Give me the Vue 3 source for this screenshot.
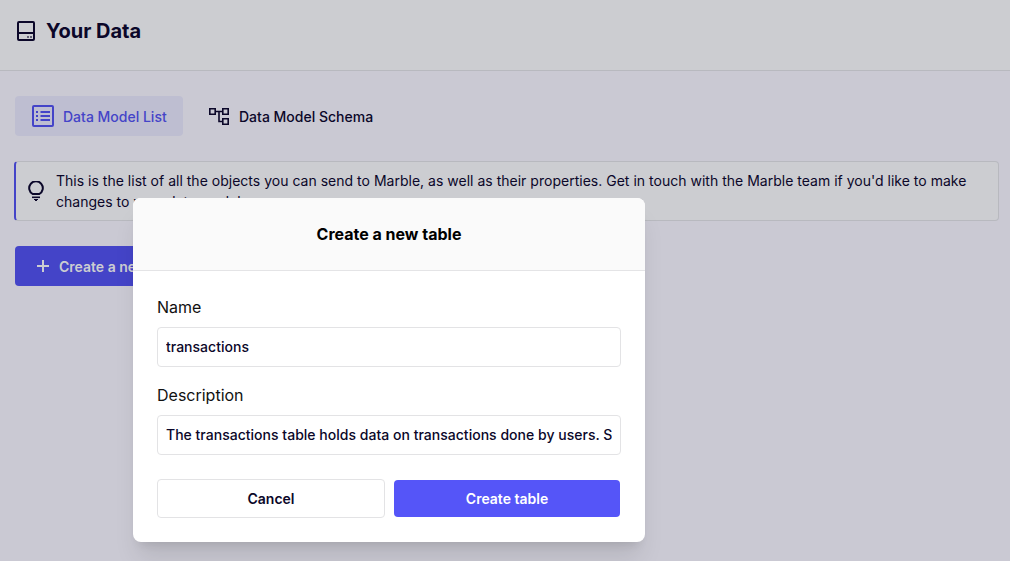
<script setup>
import { ref } from 'vue'

const name = ref('transactions')
const description = ref('The transactions table holds data on transactions done by users. Should be ingested in real time.')
</script>

<template>
  <div class="page">
    <header class="header">
      <svg class="disk" width="20" height="22" viewBox="0 0 20 22" fill="none">
        <rect x="1" y="1" width="16" height="18" rx="1" stroke="currentColor" stroke-width="2" />
        <path d="M1 12h16" stroke="currentColor" stroke-width="2" />
        <path d="M10 15h2v2h-2zM13 15h2v2h-2z" fill="currentColor" opacity=".55" />
      </svg>
      <h1>Your Data</h1>
    </header>
    <main class="content">
      <nav class="tabs">
        <a class="tab active">
          <svg width="22" height="22" viewBox="0 0 22 22" fill="none">
            <rect x="1" y="1" width="20" height="20" rx="1" stroke="currentColor" stroke-width="2" />
            <path d="M4 7h2M4 11h2M4 15h2M8.5 7H18M8.5 11H18M8.5 15H18" stroke="currentColor" stroke-width="2" />
          </svg>
          <span>Data Model List</span>
        </a>
        <a class="tab">
          <svg class="schema" width="21" height="20" viewBox="0 0 21 20" fill="none" stroke="currentColor">
            <path d="M.8 1.8h5.4v5.4H.8zM13.8 1.8h5.4v5.4h-5.4zM13.8 11.8h5.4v5.4h-5.4z" stroke-width="1.6" />
            <path d="M7 4.5h6M10 4.5v10h3" stroke-width="1.6" />
          </svg>
          <span>Data Model Schema</span>
        </a>
      </nav>
      <section class="callout">
        <svg width="16" height="20" viewBox="0 0 16 20" fill="none" stroke="currentColor" stroke-width="2">
          <path d="M4.9 13.1a6.8 6.8 0 1 1 6.2 0z" />
          <path d="M4 16.3h8" stroke-width="1.6" />
          <path d="M6 18h4v1H9v1H7v-1H6z" fill="currentColor" stroke="none" />
        </svg>
        <p>This is the list of all the objects you can send to Marble, as well as their properties. Get in touch with the Marble team if you'd like to make changes to your data model.</p>
      </section>
      <button class="new">
        <svg width="12" height="12" viewBox="0 0 12 12" stroke="currentColor" stroke-width="2"><path d="M0 6h12M6 0v12" /></svg>
        <span>Create a new table</span>
      </button>
    </main>

    <div class="modal" role="dialog">
      <h2>Create a new table</h2>
      <form class="form" @submit.prevent>
        <label for="name">Name</label>
        <input id="name" v-model="name" />
        <label for="description">Description</label>
        <input id="description" v-model="description" />
        <div class="actions">
          <button class="cancel" type="button">Cancel</button>
          <button class="create">Create table</button>
        </div>
      </form>
    </div>
  </div>
</template>

<style>
body { margin: 0; overflow: hidden; }
</style>
<style scoped>
* { box-sizing: border-box; }
.page { position: relative; width: 1010px; height: 561px; overflow: hidden; background: #cac9d3; color: #0b0729; font-family: Inter, "Liberation Sans", sans-serif; font-size: 14px; }
.header { display: flex; align-items: center; height: 71px; padding: 0 17px 9px; background: #cccdd1; border-bottom: 1px solid #b8b9bf; }
.disk { margin-top: 2px; }
h1 { margin: 0 0 0 9px; font-size: 20px; line-height: 28px; font-weight: 700; }
.content { display: flex; flex-direction: column; align-items: flex-start; padding: 25px 11px 0 15px; }
.tabs { display: flex; gap: 9px; height: 40px; }
.tab { display: flex; align-items: center; gap: 9px; padding: 0 15px 0 17px; border-radius: 4px; font-weight: 500; line-height: 21px; white-space: nowrap; }
.tab span { margin-top: 1px; }
.schema { margin-top: 1px; }
.active { width: 168px; background: #bebed1; color: #4444c8; }
.callout { display: flex; align-items: center; align-self: stretch; gap: 12px; height: 60px; margin: 25px 0 25px -1px; padding: 0 24px 0 12px; background: #cccdd1; border: 1px solid #b8b9bf; border-left: 2px solid #4444c8; border-radius: 4px; }
.callout svg { flex: none; }
.callout p { margin: 0; line-height: 21px; letter-spacing: .012px; }
button { font: 600 14px/21px Inter, "Liberation Sans", sans-serif; border: 0; border-radius: 4px; padding: 0; }
.new { display: flex; align-items: center; gap: 10px; width: 190px; height: 40px; padding-left: 22px; color: #cccdd1; background: #4444c8; }
.new span { margin-top: 1px; }
.modal { position: absolute; left: 133px; top: 198px; width: 512px; height: 344px; overflow: hidden; border-radius: 8px; background: #fff; box-shadow: 0 20px 25px -5px rgba(0,0,0,.1), 0 8px 10px -6px rgba(0,0,0,.1); }
h2 { margin: 0; height: 73px; border-bottom: 1px solid #e4e4e6; background: #fafafa; color: #000; text-align: center; font-size: 16px; line-height: 72px; font-weight: 700; }
.form { display: flex; flex-direction: column; padding: 24px; }
label { color: #111; font-size: 16px; line-height: 24px; margin-bottom: 8px; }
input { width: 100%; height: 40px; margin: 0 0 16px; padding: 0 8px 1px; border: 1px solid #e3e3e5; border-radius: 4px; outline: none; background: #fff; color: #0b0729; font: 500 14px/20px Inter, "Liberation Sans", sans-serif; letter-spacing: .018px; }
.actions { display: flex; align-items: center; gap: 9px; margin-top: 8px; }
.cancel { width: 228px; height: 39px; border: 1px solid #e3e3e5; background: #fff; color: #0b0729; }
.create { width: 226px; height: 37px; color: #fff; background: #5555f8; }
</style>
